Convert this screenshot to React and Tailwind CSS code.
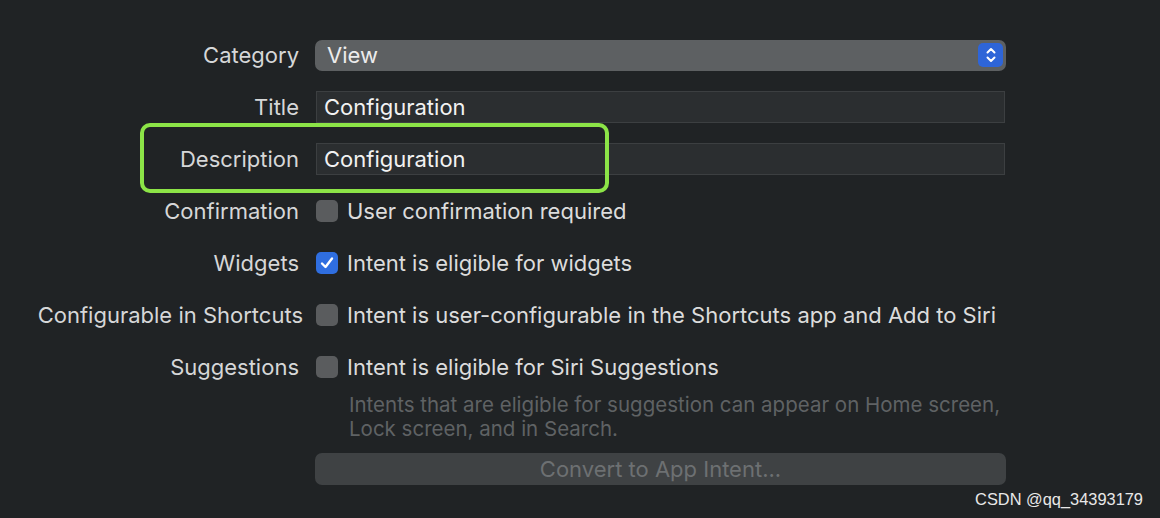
import React from 'react';

const Check = ({ checked }) => (
  <span
    className={
      'flex h-[22px] w-[22px] shrink-0 items-center justify-center rounded-[5px] ' +
      (checked ? 'bg-[#2f6ee0]' : 'bg-[#5a5c5e]')
    }
  >
    {checked && (
      <svg width="16" height="16" viewBox="0 0 16 16" fill="none">
        <path d="M3 8.5 L6.5 12 L13 3.5" stroke="white" strokeWidth="2.4" strokeLinecap="round" strokeLinejoin="round" />
      </svg>
    )}
  </span>
);

const Row = ({ label, children }) => (
  <div className="flex h-[52px] items-center">
    <div className="w-[299px] shrink-0 whitespace-nowrap text-right text-[#d6d7d8]">{label}</div>
    <div className="ml-[16px] flex w-[691px] items-center">{children}</div>
  </div>
);

const Field = ({ value }) => (
  <div className="ml-px flex h-[32px] w-[689px] items-center border border-[#3c3f41] bg-[#2b2e30] px-[7px] text-[#f2f2f2]">
    {value}
  </div>
);

const CheckRow = ({ checked, text }) => (
  <div className="ml-px flex items-center gap-[9px]">
    <Check checked={checked} />
    <span className="whitespace-nowrap text-[#dcdcdc]">{text}</span>
  </div>
);

export default function App() {
  return (
    <div
      className="relative h-[518px] w-[1160px] overflow-hidden bg-[#202325] text-[22px]"
      style={{ fontFamily: 'Inter, "Noto Sans", sans-serif' }}
    >
      <div className="pt-[29px]">
        <Row label="Category">
          <div className="flex h-[31px] w-[691px] items-center justify-between rounded-[7px] bg-[#5d6062] pl-[12px] pr-[3px] text-[#ececec]">
            <span>View</span>
            <span className="flex h-[24px] w-[25px] items-center justify-center rounded-[5px] bg-[#2e65d8]">
              <svg width="12" height="18" viewBox="0 0 12 18" fill="none">
                <path d="M2.5 6.5 L6 3 L9.5 6.5" stroke="white" strokeWidth="2" strokeLinecap="round" strokeLinejoin="round" />
                <path d="M2.5 11.5 L6 15 L9.5 11.5" stroke="white" strokeWidth="2" strokeLinecap="round" strokeLinejoin="round" />
              </svg>
            </span>
          </div>
        </Row>
        <Row label="Title">
          <Field value="Configuration" />
        </Row>
        <Row label="Description">
          <Field value="Configuration" />
        </Row>
        <Row label="Confirmation">
          <CheckRow text="User confirmation required" />
        </Row>
        <Row label="Widgets">
          <CheckRow checked text="Intent is eligible for widgets" />
        </Row>
        <Row label={<span className="mr-[-4px]">Configurable in Shortcuts</span>}>
          <CheckRow text="Intent is user-configurable in the Shortcuts app and Add to Siri" />
        </Row>
        <Row label="Suggestions">
          <CheckRow text="Intent is eligible for Siri Suggestions" />
        </Row>
        <div className="ml-[349px] w-[700px] whitespace-nowrap text-[20.5px] leading-6 text-[#5f6264]">
          Intents that are eligible for suggestion can appear on Home screen,
          <br />
          Lock screen, and in Search.
        </div>
        <div className="ml-[315px] mt-3 flex h-[32px] w-[691px] items-center justify-center rounded-[7px] bg-[#3f4244] text-[#6d7072]">
          Convert to App Intent...
        </div>
      </div>

      <div className="absolute left-[140px] top-[123px] h-[70px] w-[469px] rounded-[10px] border-[4px] border-[#8ce447]" />

      <div
        className="absolute right-[17px] top-[487px] text-[16.4px] text-[#e8e8e8]"
        style={{ fontFamily: '"Liberation Sans", sans-serif' }}
      >
        CSDN @qq_34393179
      </div>
    </div>
  );
}
